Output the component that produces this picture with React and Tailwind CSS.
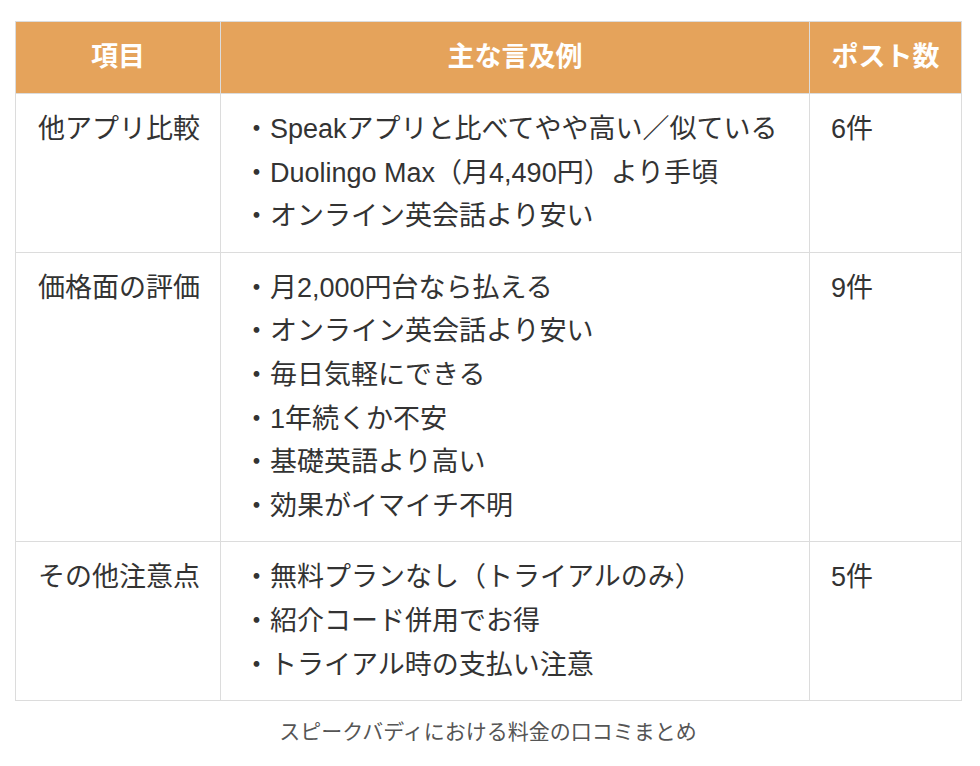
const rows = [
  {
    item: "他アプリ比較",
    mentions: [
      "Speakアプリと比べてやや高い／似ている",
      "Duolingo Max（月4,490円）より手頃",
      "オンライン英会話より安い",
    ],
    count: "6件",
  },
  {
    item: "価格面の評価",
    mentions: [
      "月2,000円台なら払える",
      "オンライン英会話より安い",
      "毎日気軽にできる",
      "1年続くか不安",
      "基礎英語より高い",
      "効果がイマイチ不明",
    ],
    count: "9件",
  },
  {
    item: "その他注意点",
    mentions: [
      "無料プランなし（トライアルのみ）",
      "紹介コード併用でお得",
      "トライアル時の支払い注意",
    ],
    count: "5件",
  },
]

export default function App() {
  return (
    <div
      className="min-h-[766px] bg-white pt-[21px] pl-[15px] pr-[19px]"
      style={{ fontFamily: '"Liberation Sans", "Noto Sans CJK JP", sans-serif' }}
    >
      <table className="w-[946px] border-collapse table-fixed text-[#333] text-[27px] leading-[43.6px]">
        <colgroup>
          <col className="w-[205px]" />
          <col className="w-[589px]" />
          <col className="w-[152px]" />
        </colgroup>
        <thead>
          <tr className="bg-[#e5a35b] text-white h-[72px]">
            <th className="border border-[#dcdcdc] font-bold text-center">項目</th>
            <th className="border border-[#dcdcdc] font-bold text-center">主な言及例</th>
            <th className="border border-[#dcdcdc] font-bold text-center">ポスト数</th>
          </tr>
        </thead>
        <tbody>
          {rows.map((row) => (
            <tr key={row.item}>
              <td className="border border-[#dcdcdc] align-top whitespace-nowrap pl-[22px] pr-0 pt-[14px] pb-[13px]">
                {row.item}
              </td>
              <td className="border border-[#dcdcdc] align-top pl-[22px] pr-2 pt-[14px] pb-[13px]">
                {row.mentions.map((m) => (
                  <div key={m} className="whitespace-nowrap">・{m}</div>
                ))}
              </td>
              <td className="border border-[#dcdcdc] align-top px-[21px] pt-[14px] pb-[13px]">
                {row.count}
              </td>
            </tr>
          ))}
        </tbody>
      </table>
      <p className="w-[946px] text-center text-[#555] text-[21px] mt-[15px]">
        スピークバディにおける料金の口コミまとめ
      </p>
    </div>
  )
}
